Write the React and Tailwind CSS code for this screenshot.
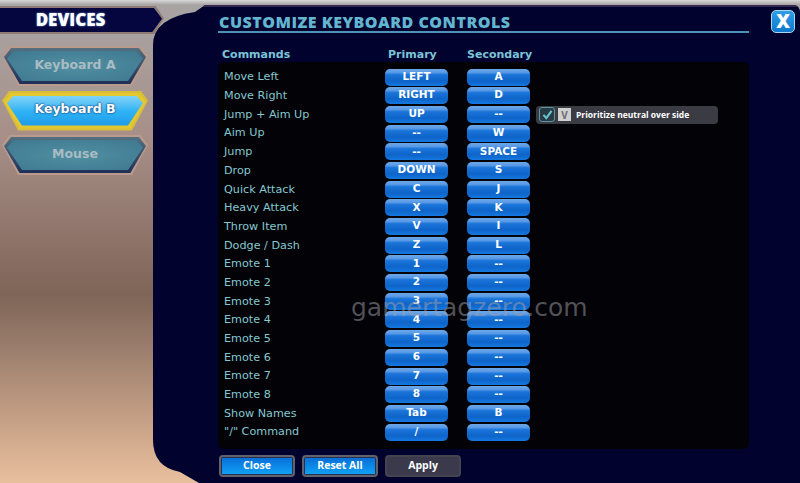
const rows = [
  ["Move Left", "LEFT", "A"],
  ["Move Right", "RIGHT", "D"],
  ["Jump + Aim Up", "UP", "--"],
  ["Aim Up", "--", "W"],
  ["Jump", "--", "SPACE"],
  ["Drop", "DOWN", "S"],
  ["Quick Attack", "C", "J"],
  ["Heavy Attack", "X", "K"],
  ["Throw Item", "V", "I"],
  ["Dodge / Dash", "Z", "L"],
  ["Emote 1", "1", "--"],
  ["Emote 2", "2", "--"],
  ["Emote 3", "3", "--"],
  ["Emote 4", "4", "--"],
  ["Emote 5", "5", "--"],
  ["Emote 6", "6", "--"],
  ["Emote 7", "7", "--"],
  ["Emote 8", "8", "--"],
  ["Show Names", "Tab", "B"],
  ['"/" Command', "/", "--"],
];

const HEX = "[clip-path:polygon(5%_0,95%_0,100%_25%,89%_100%,11%_100%,0_25%)]";

function Device({ label, active }) {
  return (
    <div className={`${HEX} w-[146px] h-[40px] p-[2px] ${active ? "bg-[#d9bd3a]" : "bg-[#b99a8d]"}`}>
      <div className={`${HEX} w-full h-full p-[3px] ${active ? "bg-[#e3c92f]" : "bg-gradient-to-b from-[#54707f] to-[#1f2f58]"}`}>
        <div
          className={`${HEX} w-full h-full flex items-center justify-center pb-[2px] text-[12.5px] font-bold ${
            active
              ? "bg-gradient-to-b from-[#7fd3f7] via-[#2fb3f5] to-[#1d9be8] text-white [text-shadow:0_0_2px_#1a4a80,0_0_2px_#1a4a80]"
              : "bg-[radial-gradient(ellipse_at_center,#4d8b9e_20%,#3f7890_100%)] text-[#a9bcc4]"
          }`}
        >
          {label}
        </div>
      </div>
    </div>
  );
}

function KeyButton({ children }) {
  return (
    <div className="w-[63px] h-[17px] rounded-[5px] flex items-center justify-center bg-[linear-gradient(180deg,#6ba8ea_0%,#5a9ae6_20%,#1a74da_34%,#0e64c8_70%,#1478e0_100%)] text-white text-[10.5px] font-bold leading-none pb-[2px]">
      {children}
    </div>
  );
}

function FootButton({ children, off }) {
  return (
    <div className={`w-[76px] h-[22px] rounded-[4px] border-[2px] p-[1px] ${off ? "border-[#44444f] bg-[#3a3a4c]" : "border-[#62626f] bg-[#24304e]"}`}>
      <div
        className={`w-full h-full flex items-center justify-center text-[10.5px] font-['Open_Sans',sans-serif] font-bold text-white ${
          off ? "bg-[#3a3a4c]" : "bg-gradient-to-b from-[#0a6fd8] to-[#12a0f5]"
        }`}
      >
        {children}
      </div>
    </div>
  );
}

export default function App() {
  return (
    <div className="relative w-[800px] h-[483px] overflow-hidden flex font-['DejaVu_Sans',sans-serif] bg-[linear-gradient(180deg,#d8d8d8_0%,#a8a4a4_1%,#a8a09e_8%,#a88f88_28%,#7f6558_61%,#9a7d6c_72%,#c9a388_88%,#e9c09e_100%)]">
      {/* Sidebar */}
      <aside className="w-[153px] shrink-0 flex flex-col">
        <div className="w-[164px] h-[28px] mt-[6px] [clip-path:polygon(0_0,95%_0,100%_45%,94%_100%,0_100%)] bg-[#8f7a76] pr-[2px] py-[2px] relative z-10">
          <div className="w-full h-full [clip-path:polygon(0_0,95%_0,100%_45%,94%_100%,0_100%)] bg-[#05053f] flex items-center justify-center pr-[21px] text-[17px] font-['Open_Sans',sans-serif] font-extrabold text-white [text-shadow:0_0_2px_#7fb4e8]">
            DEVICES
          </div>
        </div>
        <div className="ml-[2px] mt-[12px] flex flex-col gap-[4.5px]">
          <Device label="Keyboard A" />
          <Device label="Keyboard B" active />
          <Device label="Mouse" />
        </div>
      </aside>

      {/* Panel */}
      <main className="relative flex-1 mt-[5px] h-[478px] bg-[#02022f] [clip-path:path('M52,0_L640,0_Q647,0_647,8_L647,478_L46,478_L27,467_Q0,462_0,435_L0,40_Q0,13_42,7_Z')] pl-[65px] pr-[51px] flex flex-col">
        <div className="absolute left-[50px] right-0 top-0 h-[2px] bg-[#35284e]" />
        <h1 className="mt-[9px] h-[17px] leading-[17px] text-[16px] pl-[1px] font-['Open_Sans',sans-serif] font-extrabold text-[#62b6cf] tracking-[0.5px]">
          CUSTOMIZE KEYBOARD CONTROLS
        </h1>
        <div className="h-[2px] bg-[#4f92b8]" />

        <div className="mt-[12px] h-[16px] flex items-center text-[11px] font-bold text-[#7bc4d8] leading-none pt-[3px]">
          <div className="w-[170px] pl-[4px]">Commands</div>
          <div className="w-[79px]">Primary</div>
          <div className="whitespace-nowrap">Secondary</div>
        </div>

        <div className="h-[387px] mt-[1px] rounded-[6px] bg-[#020207] pt-[6.5px] pl-[6px]">
          {rows.map((r, i) => (
            <div key={r[0]} className="h-[18.7px] flex items-start">
              <div className="w-[161px] h-[17px] flex items-center text-[11.2px] text-[#86c8cf] leading-none">{r[0]}</div>
              <KeyButton>{r[1]}</KeyButton>
              <div className="w-[19px]" />
              <KeyButton>{r[2]}</KeyButton>
              {i === 2 && (
                <div className="ml-[6px] w-[182px] h-[18px] rounded-[4px] bg-[#3b3b44] flex items-center pl-[3px] text-white text-[8.5px] font-['Open_Sans',sans-serif] font-bold">
                  <div className="w-[16px] h-[15px] rounded-[3px] border border-[#5b97a5] bg-[#2a3a44] flex items-center justify-center">
                    <svg viewBox="0 0 16 16" className="w-[13px] h-[13px]">
                      <path d="M3 8.5 L6.5 12.5 L13 3.5" fill="none" stroke="#62c6cf" strokeWidth="2.6" />
                    </svg>
                  </div>
                  <div className="ml-[3px] w-[13px] h-[13px] bg-[#cfcfcf] text-[#6a6a72] text-[10px] flex items-center justify-center leading-none">
                    V
                  </div>
                  <div className="ml-[5px] whitespace-nowrap">Prioritize neutral over side</div>
                </div>
              )}
            </div>
          ))}
        </div>

        <div className="mt-[6px] flex gap-[7px] ml-[1px]">
          <FootButton>Close</FootButton>
          <FootButton>Reset All</FootButton>
          <FootButton off>Apply</FootButton>
        </div>
      </main>

      {/* Close X */}
      <div className="absolute left-[771px] top-[10px] w-[24px] h-[23px] rounded-[5px] border border-[#a8d8f0] bg-gradient-to-b from-[#2f9ee8] to-[#0f78cc] flex items-center justify-center text-white text-[19px] font-['Open_Sans',sans-serif] font-extrabold leading-none">
        X
      </div>

      {/* Watermark */}
      <div className="absolute left-[351px] top-[292px] text-[25px] leading-[32px] text-[#a0a0a8]/50 whitespace-nowrap">
        gamertagzero.com
      </div>
    </div>
  );
}
